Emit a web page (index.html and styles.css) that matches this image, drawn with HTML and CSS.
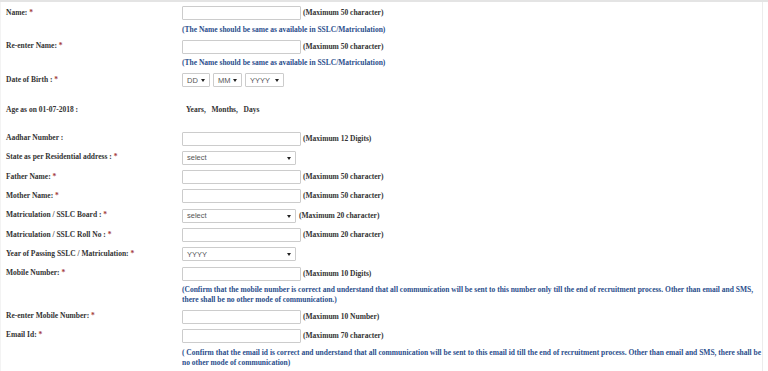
FILE: index.html
```html
<!DOCTYPE html>
<html>
<head>
<meta charset="utf-8">
<link rel="stylesheet" href="styles.css">
</head>
<body>
<div class="page">
  <div class="form">
    <div class="label">Name: <span class="req">*</span></div>
    <div class="field"><input class="text" type="text"><span class="hint">(Maximum 50 character)</span></div>

    <div class="note note-1">(The Name should be same as available in SSLC/Matriculation)</div>

    <div class="label">Re-enter Name: <span class="req">*</span></div>
    <div class="field"><input class="text" type="text"><span class="hint">(Maximum 50 character)</span></div>

    <div class="note note-1">(The Name should be same as available in SSLC/Matriculation)</div>

    <div class="label">Date of Birth : <span class="req">*</span></div>
    <div class="field">
      <span class="sel sel-dd">DD</span>
      <span class="sel sel-mm">MM</span>
      <span class="sel sel-yy">YYYY</span>
    </div>

    <div class="label age-label">Age as on 01-07-2018 :</div>
    <div class="age-value">Years,&nbsp;&nbsp;&nbsp;Months,&nbsp;&nbsp;&nbsp;Days</div>

    <div class="label">Aadhar Number :</div>
    <div class="field"><input class="text" type="text"><span class="hint">(Maximum 12 Digits)</span></div>

    <div class="label">State as per Residential address : <span class="req">*</span></div>
    <div class="field"><span class="sel sel-wide">select</span></div>

    <div class="label">Father Name: <span class="req">*</span></div>
    <div class="field"><input class="text" type="text"><span class="hint">(Maximum 50 character)</span></div>

    <div class="label">Mother Name: <span class="req">*</span></div>
    <div class="field"><input class="text" type="text"><span class="hint">(Maximum 50 character)</span></div>

    <div class="label">Matriculation / SSLC Board : <span class="req">*</span></div>
    <div class="field"><span class="sel sel-wide">select</span><span class="hint hint-sel">(Maximum 20 character)</span></div>

    <div class="label">Matriculation / SSLC Roll No : <span class="req">*</span></div>
    <div class="field"><input class="text" type="text"><span class="hint">(Maximum 20 character)</span></div>

    <div class="label">Year of Passing SSLC / Matriculation: <span class="req">*</span></div>
    <div class="field"><span class="sel sel-wide">YYYY</span></div>

    <div class="label">Mobile Number: <span class="req">*</span></div>
    <div class="field"><input class="text" type="text"><span class="hint">(Maximum 10 Digits)</span></div>

    <div class="note">(Confirm that the mobile number is correct and understand that all communication will be sent to this number only till the end of recruitment process. Other than email and SMS, there shall be no other mode of communication.)</div>

    <div class="label">Re-enter Mobile Number: <span class="req">*</span></div>
    <div class="field"><input class="text" type="text"><span class="hint">(Maximum 10 Number)</span></div>

    <div class="label">Email Id: <span class="req">*</span></div>
    <div class="field"><input class="text" type="text"><span class="hint">(Maximum 70 character)</span></div>

    <div class="note note-last">( Confirm that the email id is correct and understand that all communication will be sent to this email id till the end of recruitment process. Other than email and SMS, there shall be no other mode of communication)</div>
  </div>
</div>
</body>
</html>
```

FILE: styles.css
```css
html, body {
  margin: 0;
  padding: 0;
  background: #ffffff;
}

body {
  border-top: 2px solid #e4e4e4;
  font-family: "Liberation Serif", "Times New Roman", serif;
  font-size: 7.5px;
  font-weight: bold;
  color: #333333;
  overflow: hidden;
}

.page {
  width: 763px;
  height: 369px;
  box-sizing: border-box;
  border-left: 1px solid #f3f3f3;
  border-right: 1px solid #ececec;
}

.form {
  display: grid;
  grid-template-columns: 176px 585px;
  row-gap: 4.3px;
  padding: 3.5px 0 0 5px;
}

.label {
  line-height: 13px;
  white-space: nowrap;
}

.req {
  color: #a33a3a;
}

.field {
  display: flex;
  align-items: center;
  height: 15px;
}

.text {
  box-sizing: border-box;
  width: 119px;
  height: 14px;
  margin: 0;
  padding: 0 3px;
  border: 1px solid #cccccc;
  border-radius: 1px;
  background: #ffffff;
  font: 7.5px "Liberation Sans", Arial, sans-serif;
}

.hint {
  margin-left: 2px;
  line-height: 10px;
  white-space: nowrap;
}

.hint-sel {
  margin-left: 3px;
}

.sel {
  position: relative;
  box-sizing: border-box;
  display: inline-flex;
  align-items: center;
  height: 14px;
  margin-right: 3px;
  padding-left: 4px;
  border: 1px solid #cccccc;
  border-radius: 1px;
  background: #ffffff;
  font-family: "Liberation Sans", Arial, sans-serif;
  font-weight: normal;
  font-size: 7.5px;
  color: #555555;
}

.sel::after {
  content: "";
  position: absolute;
  right: 4px;
  top: 5px;
  border-left: 2px solid transparent;
  border-right: 2px solid transparent;
  border-top: 3px solid #222222;
}

.sel-dd { width: 28px; }
.sel-mm { width: 29px; }
.sel-yy { width: 39px; }
.sel-wide { width: 114px; margin-right: 0; }

.note {
  grid-column: 2;
  color: #2b4e8c;
  line-height: 9.7px;
}

.note-1 {
  line-height: 9.9px;
}

.note-last {
  padding-top: 0.5px;
}

.age-label,
.age-value {
  height: 35px;
  line-height: 35px;
}

.age-value {
  padding-left: 4px;
}
```
